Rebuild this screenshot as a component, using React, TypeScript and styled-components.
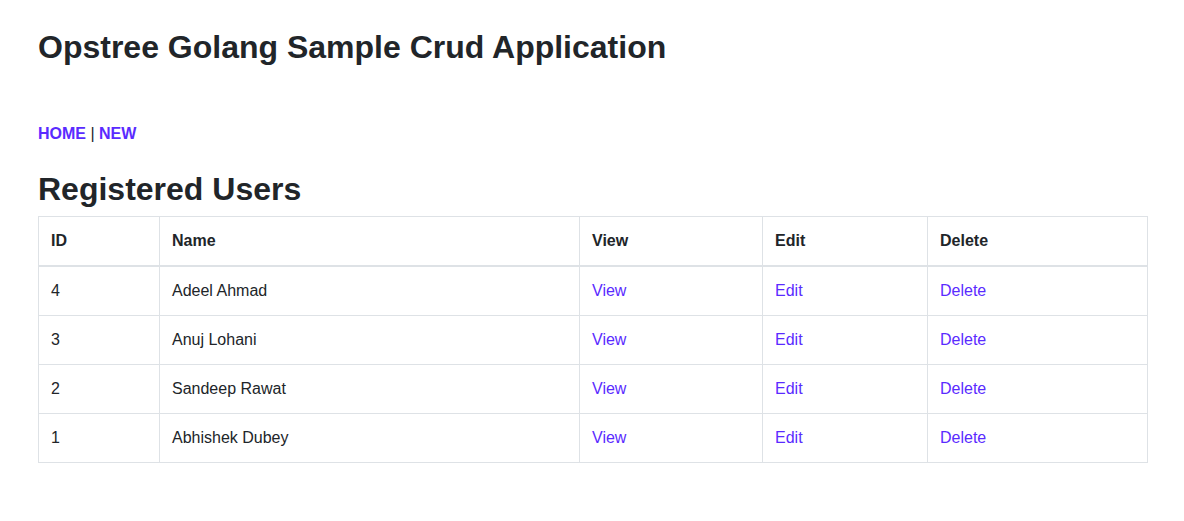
import React from "react";
import styled, { createGlobalStyle } from "styled-components";

const GlobalStyle = createGlobalStyle`
  body {
    margin: 0;
    background: #fff;
    color: #212529;
    font-family: "Liberation Sans", Arial, sans-serif;
    font-size: 16px;
    line-height: 1.5;
  }
`

const Page = styled.div`
  padding: 0 36px 0 38px;
`

const Title = styled.h1`
  margin: 0;
  padding-top: 28px;
  font-size: 32px;
  font-weight: 700;
  line-height: 1.2;
`

const Nav = styled.nav`
  margin-top: 56px;
  font-size: 16px;
  color: #212529;
`

const Link = styled.a<{ $bold?: boolean }>`
  color: #5a2bff;
  text-decoration: none;
  font-weight: ${p => (p.$bold ? 700 : 400)};
  cursor: pointer;
`

const SubTitle = styled.h2`
  margin: 24px 0 7px;
  font-size: 32px;
  font-weight: 700;
  line-height: 1.2;
`

const Table = styled.table`
  width: 1110px;
  border-collapse: collapse;
  border: 1px solid #dee2e6;
`

const HeadCell = styled.th<{ $w?: number }>`
  box-sizing: border-box;
  width: ${p => (p.$w ? `${p.$w}px` : "auto")};
  text-align: left;
  padding: 12px;
  font-weight: 700;
  border: 1px solid #dee2e6;
  border-bottom: 2px solid #dee2e6;
`

const Cell = styled.td`
  padding: 12px;
  border: 1px solid #dee2e6;
`

const users = [
  { id: 4, name: "Adeel Ahmad" },
  { id: 3, name: "Anuj Lohani" },
  { id: 2, name: "Sandeep Rawat" },
  { id: 1, name: "Abhishek Dubey" },
]

export default function App() {
  return (
    <Page>
      <GlobalStyle />
      <Title>Opstree Golang Sample Crud Application</Title>
      <Nav>
        <Link $bold>HOME</Link> | <Link $bold>NEW</Link>
      </Nav>
      <SubTitle>Registered Users</SubTitle>
      <Table>
        <thead>
          <tr>
            <HeadCell $w={121}>ID</HeadCell>
            <HeadCell $w={420}>Name</HeadCell>
            <HeadCell $w={183}>View</HeadCell>
            <HeadCell $w={165}>Edit</HeadCell>
            <HeadCell>Delete</HeadCell>
          </tr>
        </thead>
        <tbody>
          {users.map(u => (
            <tr key={u.id}>
              <Cell>{u.id}</Cell>
              <Cell>{u.name}</Cell>
              <Cell><Link>View</Link></Cell>
              <Cell><Link>Edit</Link></Cell>
              <Cell><Link>Delete</Link></Cell>
            </tr>
          ))}
        </tbody>
      </Table>
    </Page>
  )
}
